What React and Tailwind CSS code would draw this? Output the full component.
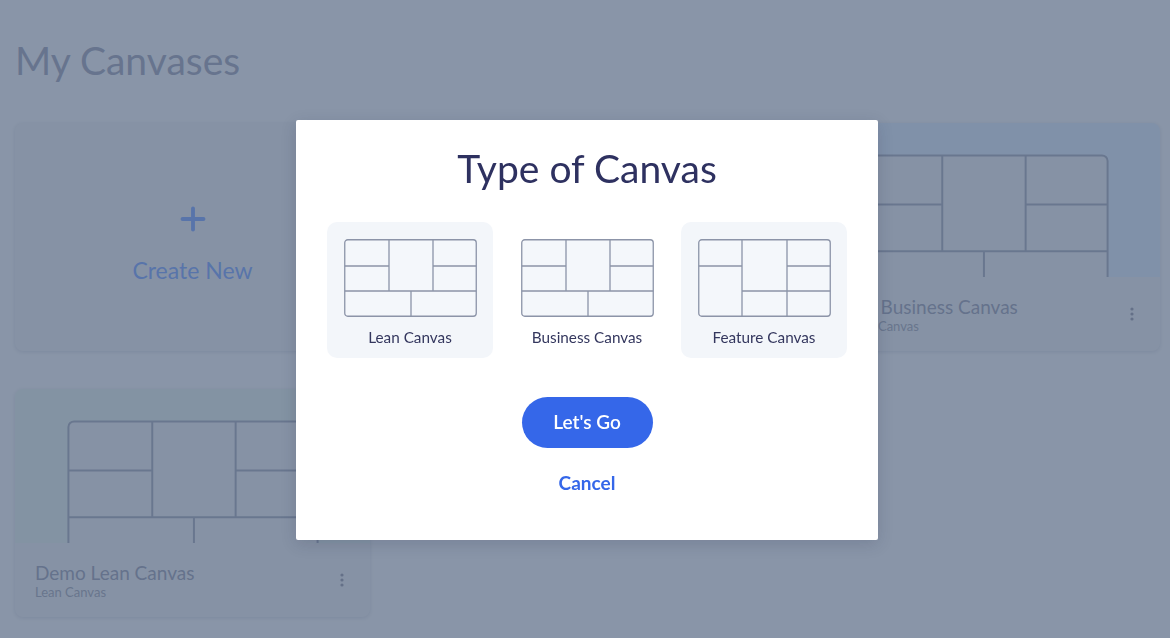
import { Plus } from 'lucide-react';

const font = { fontFamily: 'Lato, "Open Sans", sans-serif' };

function LeanIcon({ width = 133, height = 78, stroke = '#8c94a8', fill = '#f4f7fb', strokeWidth = 1.3 }) {
  return (
    <svg width={width} height={height} viewBox="0 0 133 78" fill="none" preserveAspectRatio="none">
      <rect x="0.75" y="0.75" width="131.5" height="76.5" rx="3" fill={fill} stroke={stroke} strokeWidth={strokeWidth} vectorEffect="non-scaling-stroke" />
      <path
        d="M45 0.75V52M89 0.75V52M0.75 27H45M89 27H132.25M0.75 52H132.25M67 52V77.25"
        stroke={stroke}
        strokeWidth={strokeWidth}
        vectorEffect="non-scaling-stroke"
      />
    </svg>
  );
}

function FeatureIcon() {
  return (
    <svg width="133" height="78" viewBox="0 0 133 78" fill="none">
      <rect x="0.75" y="0.75" width="131.5" height="76.5" rx="3" fill="#f4f7fb" stroke="#8c94a8" strokeWidth="1.3" />
      <path d="M44 0.75V77.25M89 0.75V77.25M0.75 27H44M89 27H132.25M44 52H132.25" stroke="#8c94a8" strokeWidth="1.3" />
    </svg>
  );
}

function Dots({ color }) {
  return (
    <svg width="4" height="14" viewBox="0 0 4 14" fill={color}>
      <circle cx="2" cy="2" r="1.6" />
      <circle cx="2" cy="7" r="1.6" />
      <circle cx="2" cy="12" r="1.6" />
    </svg>
  );
}

function CanvasCard({ title, subtitle, thumbBg }) {
  return (
    <div className="h-[228px] rounded-lg bg-[#eff1f4] shadow-[0_1px_4px_rgba(30,50,90,0.12)] overflow-hidden flex flex-col">
      <div className={`h-[154px] overflow-hidden flex justify-center pt-[31px] ${thumbBg}`}>
        <LeanIcon width={252} height={146} stroke="#b5bac8" fill="#eff1f4" strokeWidth={2} />
      </div>
      <div className="flex-1 flex items-center justify-between pl-5 pr-[26px]">
        <div className="flex flex-col">
          <span className="text-[19px] leading-[23px] text-[#adb1c2]">{title}</span>
          <span className="text-[13px] leading-[16px] text-[#b3b7c4]">{subtitle}</span>
        </div>
        <Dots color="#abadba" />
      </div>
    </div>
  );
}

export default function App() {
  return (
    <div className="relative min-h-screen bg-[#f5f7fa] overflow-hidden" style={font}>
      <div className="pl-[15px] pr-[10px]">
        <h1 className="mt-[37px] mb-[40px] text-[39px] leading-[46px] font-normal text-[#b1b5c6]">My Canvases</h1>
        <div className="grid grid-cols-3 gap-x-[40px] gap-y-[38px]">
          <div className="h-[228px] rounded-lg bg-[#eff1f4] shadow-[0_1px_4px_rgba(30,50,90,0.12)] flex flex-col items-center pt-[78px]">
            <Plus className="w-[36px] h-[36px] text-[#93b5fe]" strokeWidth={2.6} />
            <span className="mt-[19px] text-[23px] leading-[28px] text-[#93b5fe]">Create New</span>
          </div>
          <div />
          <CanvasCard title="Demo Business Canvas" subtitle="Business Canvas" thumbBg="bg-[#e3eefc]" />
          <CanvasCard title="Demo Lean Canvas" subtitle="Lean Canvas" thumbBg="bg-[#e9f3f1]" />
        </div>
      </div>

      <div className="fixed inset-0 bg-[#1d3356]/50 flex justify-center items-start pt-[120px]">
        <div className="ml-[4px] w-[582px] h-[420px] bg-white rounded-[2px] shadow-[0_4px_16px_rgba(20,30,60,0.15)] flex flex-col items-center pt-[25px]">
          <h2 className="text-[39px] leading-[46px] font-normal text-[#2e3160]">Type of Canvas</h2>
          <div className="mt-[31px] w-full px-[31px] grid grid-cols-3 gap-[11px]">
            <button className="h-[136px] rounded-[10px] bg-[#f3f6fa] flex flex-col items-center pt-[17px]">
              <LeanIcon />
              <span className="mt-[10px] text-[15.3px] leading-[20px] text-[#34375e]">Lean Canvas</span>
            </button>
            <button className="h-[136px] rounded-[10px] bg-white flex flex-col items-center pt-[17px]">
              <LeanIcon />
              <span className="mt-[10px] text-[15.3px] leading-[20px] text-[#34375e]">Business Canvas</span>
            </button>
            <button className="h-[136px] rounded-[10px] bg-[#f3f6fa] flex flex-col items-center pt-[17px]">
              <FeatureIcon />
              <span className="mt-[10px] text-[15.3px] leading-[20px] text-[#34375e]">Feature Canvas</span>
            </button>
          </div>
          <button className="mt-[39px] w-[131px] h-[51px] rounded-full bg-[#3567e9] text-white text-[19px] font-semibold">
            Let's Go
          </button>
          <button className="mt-[23px] text-[19px] leading-[24px] font-bold text-[#3567e9]">Cancel</button>
        </div>
      </div>
    </div>
  );
}
